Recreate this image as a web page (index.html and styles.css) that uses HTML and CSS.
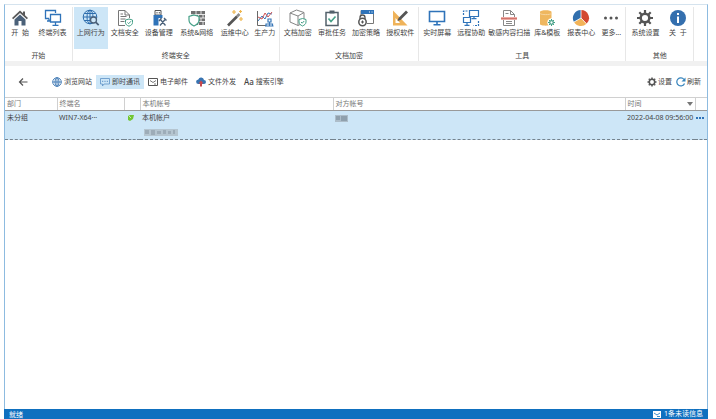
FILE: index.html
```html
<!DOCTYPE html>
<html lang="zh-CN">
<head>
<meta charset="utf-8">
<title>上网行为</title>
<link rel="stylesheet" href="styles.css">
</head>
<body>
<div class="window">
<header class="ribbon">
  <section class="group">
    <div class="items">
      <button class="item narrow"><svg class="icon" viewBox="0 0 18 18"><path d="M1 9 9 1.500l3 2.800V2.500h2v3.800L17 9l-1.200 1.200L9 4 2.200 10.200z" fill="#595959"/><path d="M3.500 10.500 9 5.500l5.500 5V16.500H10.500V12H7.500v4.500H3.500z" fill="#4b6179"/></svg><span>开&nbsp; 始</span></button>
      <button class="item"><svg class="icon" viewBox="0 0 18 18" fill="none" stroke="#2f73b9" stroke-width="1.300"><path d="M5 9.500H1.500v-8h10V4M3 12h3M5 9.500V12"/><path d="M6.500 5.500h10v7.500h-10zM11.500 13v3M8.500 16.300h6"/></svg><span>终端列表</span></button>
    </div>
    <h2>开始</h2>
  </section>
  <section class="group">
    <div class="items">
      <button class="item active"><svg class="icon" viewBox="0 0 18 18" fill="none" stroke="#2d6dad"><circle cx="8" cy="8" r="6.800"/><ellipse cx="8" cy="8" rx="3" ry="6.800"/><path d="M1.200 8h13.500M2.300 4.500h11.400M2.300 11.500H9M8 1v14"/><circle cx="11.500" cy="11" r="3" fill="#cde6f7" stroke="#4b6179" stroke-width="1.300"/><path d="m13.700 13.200 3 3" stroke="#4b6179" stroke-width="1.800"/></svg><span>上网行为</span></button>
      <button class="item"><svg class="icon" viewBox="0 0 18 18" fill="none" stroke="#777"><path d="M9 16.500H2.500v-15H9L13.500 6v3M9 1.500V6h4.500M4.500 5H7M4.500 7.500h6M4.500 10h5M4.500 12.500h4"/><path d="m13 10 3.500 1v2.500c0 2-1.500 3-3.500 3.700-2-.7-3.500-1.700-3.500-3.700V11z" stroke="#45a087"/><path d="m11.500 13.500 1.200 1.200 2.300-2.500" stroke="#45a087"/></svg><span>文档安全</span></button>
      <button class="item"><svg class="icon" viewBox="0 0 18 18"><path d="M5 1.500h6V6H5z" fill="none" stroke="#555"/><path d="M6.500 3h1v1.500h-1zM8.800 3h1v1.500h-1z" fill="#555"/><path d="M3.500 6h9v10.500h-9z" fill="#2f73b9"/><path d="M8.500 9H17v8.500H8.500z" fill="#fff"/><path d="m10 10 5.500 6.500M15.500 10 10 16.500M9 12l2.500-3M14 9l2.500 2.500" fill="none" stroke="#4b6179" stroke-width="1.300"/></svg><span>设备管理</span></button>
      <button class="item wide"><svg class="icon" viewBox="0 0 18 18"><path d="M3 2h14v14H3z" fill="#707070"/><path d="M3 5.500h14M3 9h14M3 12.500h14M8 2v3.500M13 2v3.500M5 5.500V9M10.500 5.500V9M15 5.500V9M8 9v3.500M13 9v3.500M10.500 12.500V16M15 12.500V16" stroke="#fff" stroke-width=".8"/><path d="m6 6 5 1.500V11c0 3-2 4.700-5 6-3-1.300-5-3-5-6V7.500z" fill="#fff" stroke="#45a087" stroke-width="1.200"/></svg><span>系统&amp;网络</span></button>
      <button class="item"><svg class="icon" viewBox="0 0 18 18"><path d="m2 16.500 9-9" stroke="#555" stroke-width="2.600"/><path d="m11 7.500 2.500-2.500" stroke="#8b8b8b" stroke-width="2.600"/><path d="M8 1v4M6 3h4M14.500 1v3M13 2.500h3M15 8v4M13 10h4" stroke="#eeb64e" stroke-width="1.200"/></svg><span>运维中心</span></button>
      <button class="item narrow"><svg class="icon" viewBox="0 0 18 18" fill="none"><path d="M1.500 2v14.500H10" stroke="#686868"/><path d="m2 12 4-5 3 3 3-6 4 1" stroke="#3977b7"/><path d="m2 8 4 2 3-6 3 4 4-5" stroke="#d25454"/><path d="M12 10h3v3h-3zM10 17v-2h6.500v2M13.500 13v4M9 17h8.500" stroke="#3977b7" stroke-width="1.200"/></svg><span>生产力</span></button>
    </div>
    <h2>终端安全</h2>
  </section>
  <section class="group">
    <div class="items">
      <button class="item"><svg class="icon" viewBox="0 0 18 18" fill="none" stroke="#858585"><path d="m1 4 6.500-3L15 3.500v10L9 16.500 1 13zM1 4l8 3 6-3.500M9 7v9.500"/><path d="m13.500 9.500 3.500 1V13c0 2-1.500 3-3.500 4-2-1-3.500-2-3.500-4v-2.500z" fill="#fff" stroke="#45a087"/><path d="m12 13 1.200 1.200 2-2.200" stroke="#45a087"/></svg><span>文档加密</span></button>
      <button class="item"><svg class="icon" viewBox="0 0 18 18" fill="none"><path d="M3 3.500h12v13H3z" stroke="#53616b" stroke-width="1.500"/><path d="M6.500 1.500h5v3h-5z" fill="#53616b"/><path d="m5.500 9.500 2.500 3 4.500-5" stroke="#45a087" stroke-width="1.600"/></svg><span>审批任务</span></button>
      <button class="item"><svg class="icon" viewBox="0 0 18 18" fill="none"><path d="M4 7V1.500h12.500v13H10" stroke="#777"/><path d="M4 1h13v4H4z" fill="#2f73b9"/><path d="M12 3h1M14.500 3h1" stroke="#fff"/><path d="M3 10V8.500a2.500 2.500 0 0 1 5 0V10" stroke="#555" stroke-width="1.300"/><circle cx="5.500" cy="13" r="3.700" fill="#fff" stroke="#555" stroke-width="1.500"/><path d="M5.500 11.500v3M4 13h3" stroke="#555"/></svg><span>加密策略</span></button>
      <button class="item"><svg class="icon" viewBox="0 0 18 18"><path fill-rule="evenodd" d="M2 1.500 16.500 16.500H2zM4.500 9v5H9z" fill="#efb35a"/><path d="m6.500 12 1-3 7.500-7.500 2 2L9.500 11z" fill="#555"/></svg><span>授权软件</span></button>
    </div>
    <h2>文档加密</h2>
  </section>
  <section class="group">
    <div class="items">
      <button class="item"><svg class="icon" viewBox="0 0 18 18" fill="none" stroke="#2f73b9"><path d="M1.500 2.500h15v10h-15z" stroke-width="1.600"/><path d="M9 12.500v3M5.500 15.800h7" stroke-width="1.600"/></svg><span>实时屏幕</span></button>
      <button class="item"><svg class="icon" viewBox="0 0 18 18" fill="none" stroke="#2f73b9" stroke-width="1.200"><path d="M7.500 1.500h9v6h-9zM12 7.500v2M9.500 9.700h5M1.500 8.500h7v5h-7zM5 13.500v3M2.500 16.400h5"/><path d="M1.500 6V2h4M16.500 12v4.500h-5" stroke-dasharray="2 1"/></svg><span>远程协助</span></button>
      <button class="item wide"><svg class="icon" viewBox="0 0 18 18" fill="none" stroke="#888"><path d="M3.500 8V1.500h7l4 4V8M10.500 1.500v4h4M5.500 4.500h3M3.500 11v5.500h11V11M6 12.500h6M6 14.500h6"/><path d="M1 8h16v3H1z" fill="#edaaa4" stroke="none"/><path d="M1 9.500h16" stroke="#cf756d"/></svg><span>敏感内容扫描</span></button>
      <button class="item"><svg class="icon" viewBox="0 0 18 18"><path d="M2 3c0-2.200 11.500-2.200 11.500 0v12c0 2.200-11.500 2.200-11.500 0z" fill="#efb75f"/><path d="M2 4.500c1.500 1.500 10 1.500 11.500 0" stroke="#f7d59f" fill="none"/><circle cx="13.500" cy="13.500" r="4.200" fill="#fff"/><circle cx="13.500" cy="13.500" r="1.800" fill="none" stroke="#45a087" stroke-width="1.300"/><path d="M13.500 10v1.500M13.500 15.500V17M10 13.500h1.500M15.500 13.500H17M11 11l1 1M15 15l1 1M11 16l1-1M15 12l1-1" stroke="#45a087"/></svg><span>库&amp;模板</span></button>
      <button class="item"><svg class="icon" viewBox="0 0 18 18"><path d="M9 9V1a8 8 0 0 1 5.500 13.800z" fill="#d34831"/><path d="m9 9 5.500 5.800A8 8 0 0 1 2 13z" fill="#f2b358"/><path d="M9 9 2 13A8 8 0 0 1 9 1z" fill="#326fad"/><path d="M9 1v8l5.500 5.800M9 9l-7 4" fill="none" stroke="#fff" stroke-width=".8"/></svg><span>报表中心</span></button>
      <button class="item narrow"><svg class="icon" viewBox="0 0 18 18" fill="#555"><circle cx="3.500" cy="9" r="1.500"/><circle cx="9" cy="9" r="1.500"/><circle cx="14.500" cy="9" r="1.500"/></svg><span>更多...</span></button>
    </div>
    <h2>工具</h2>
  </section>
  <section class="group">
    <div class="items">
      <button class="item"><svg class="icon" viewBox="0 0 18 18" fill="none" stroke="#555"><circle cx="9" cy="9" r="4.300" stroke-width="2.500"/><path d="M9 1v3M9 14v3M1 9h3M14 9h3M3.300 3.300l2.200 2.200M12.500 12.500l2.200 2.200M3.300 14.700l2.200-2.200M12.500 5.500l2.200-2.200" stroke-width="2.200"/></svg><span>系统设置</span></button>
      <button class="item narrow"><svg class="icon" viewBox="0 0 18 18"><circle cx="9" cy="9" r="8" fill="#346fae"/><path d="M8 4h2v2H8zM8 7.500h2V14H8z" fill="#fff"/></svg><span>关&nbsp; 于</span></button>
    </div>
    <h2>其他</h2>
  </section>
</header>
<main>
<nav class="toolbar">
  <button class="back" aria-label="返回"><svg viewBox="0 0 10 10" fill="none" stroke="#555"><path d="M9.500 5h-8M5 1.500 1.500 5 5 8.500" stroke-width="1.200"/></svg></button>
  <button class="tab"><svg viewBox="0 0 10 10" fill="none" stroke="#3974b1" stroke-width=".9"><circle cx="5" cy="5" r="4.300"/><ellipse cx="5" cy="5" rx="2" ry="4.300"/><path d="M.7 5h8.600M5 .7v8.600"/></svg>浏览网站</button>
  <button class="tab active"><svg viewBox="0 0 10 10" fill="none" stroke="#5e92c5" stroke-width=".8"><path d="M.5 1.500h9V7H4L2.500 9V7h-2z"/><path d="M2.200 4.300h1M4.500 4.300h1M6.800 4.300h1" stroke-width="1.200"/></svg>即时通讯</button>
  <button class="tab"><svg viewBox="0 0 10 10" fill="none" stroke="#555"><path d="M.5 1.500h9v7h-9z"/><path d="M2 3.500 5 5.500l3-2M6 7h2" stroke-width=".8"/></svg>电子邮件</button>
  <button class="tab"><svg viewBox="0 0 10 10"><path d="M2.500 7a2.300 2.300 0 0 1-.2-4.600A3 3 0 0 1 8 3a2 2 0 0 1 0 4z" fill="#3974b1"/><path d="M5 3.500 7.500 6.500H6v3H4v-3H2.500z" fill="#c8484d"/></svg>文件外发</button>
  <button class="tab"><b>Aa</b>搜索引擎</button>
  <span class="spacer"></span>
  <button class="tool"><svg viewBox="0 0 10 10" fill="none" stroke="#555"><circle cx="5" cy="5" r="2.700" stroke-width="1.500"/><path d="M5 .5V2M5 8v1.500M.5 5H2M8 5h1.500M1.800 1.800l1 1M7.200 7.200l1 1M1.800 8.200l1-1M7.200 2.800l1-1" stroke-width="1.500"/></svg>设置</button>
  <button class="tool"><svg viewBox="0 0 10 10" fill="none" stroke="#3583bc"><path d="M8.500 6.500A4 4 0 1 1 8 2.500" stroke-width="1.200"/><path d="M9.500.5v4h-4z" fill="#3583bc" stroke="none"/></svg>刷新</button>
</nav>
<table>
  <colgroup><col class="c-dept"><col class="c-name"><col class="c-state"><col class="c-local"><col class="c-peer"><col class="c-time"><col class="c-more"></colgroup>
  <thead><tr><th>部门</th><th>终端名</th><th></th><th>本机帐号</th><th>对方帐号</th><th><div class="sort">时间<svg viewBox="0 0 6 4"><path d="M0 0h6L3 4z" fill="#777"/></svg></div></th><th></th></tr></thead>
  <tbody><tr>
    <td>未分组</td><td>WIN7-X64···</td>
    <td><svg class="state" viewBox="0 0 6 6"><path d="M0 1 2 0h4L5 4 2 6 0 5z" fill="#72c634"/><path d="m1 1 2 2" stroke="#c9efac"/></svg></td>
    <td>本机帐户<svg class="mask" viewBox="0 0 34 7"><path d="M0 0h34v7H0z" fill="#b5c5d0"/><path d="M1 1h4v4H1zM7 1h4v5H7zM13 2h4v3h-4zM19 1h3v4h-3zM24 2h3v3h-3zM29 1h2v4h-2z" fill="#9dacb8"/></svg></td>
    <td><svg class="mask short" viewBox="0 0 13 7"><path d="M0 0h13v7H0z" fill="#adbdc9"/><path d="M1 1h4v4H1zM6 1h6v5H6z" fill="#8fa0ad"/></svg></td>
    <td>2022-04-08 09:56:00</td>
    <td class="more"><svg viewBox="0 0 8 2" fill="#2f73b9"><path d="M0 0h2v2H0zM3 0h2v2H3zM6 0h2v2H6z"/></svg></td>
  </tr></tbody>
</table>
</main>
<footer><span>就绪</span><span class="message"><svg viewBox="0 0 8 7"><path d="M0 0h8v7H0z" fill="#fff"/><path d="m1 2 3 2 3-2M4 5.500h3" fill="none" stroke="#0f70bf" stroke-width=".8"/></svg>1条未读信息</span></footer>
</div>
</body>
</html>
```
FILE: styles.css
```css
* { box-sizing: border-box; }
body {
  margin: 0;
  padding: 4px 8px 0 4px;
  background: #fff;
  color: #444;
  font: 7px/10px "Noto Sans", "Noto Sans CJK SC", sans-serif;
}
button {
  margin: 0;
  padding: 0;
  border: 0;
  background: none;
  color: inherit;
  font: inherit;
  white-space: nowrap;
}
svg { display: block; flex: none; }
.window {
  display: flex;
  flex-direction: column;
  min-height: calc(100vh - 4px);
  border: 1px solid #8dbbe0;
  border-top-color: #d5e3ee;
  border-bottom: 0;
}
.ribbon {
  display: grid;
  grid-template-columns: 68fr 207fr 140fr 206fr 68fr 13fr;
  padding-top: 2px;
  border-bottom: 5px solid #f1f1f1;
}
.group { border-right: 1px solid #e7e7e7; }
.items { display: flex; justify-content: space-around; padding: 0 1px; }
.item {
  display: flex;
  flex-direction: column;
  align-items: center;
  width: 34px;
  height: 42px;
  padding-top: 2px;
}
.narrow { width: 26px; }
.wide { width: 42px; }
.active { background: #cde6f7; }
.icon { width: 18px; height: 18px; margin-bottom: 1px; }
h2 { margin: 2px 0 0; font: inherit; text-align: center; }
main { flex: 1; }
.toolbar {
  display: flex;
  align-items: center;
  height: 31px;
  padding: 0 6px 0 13px;
}
.toolbar button { display: flex; align-items: center; height: 14px; }
.toolbar svg { width: 10px; height: 10px; }
.back { margin-right: 20px; }
.tab { gap: 2px; padding: 0 4px; }
.tab b { font-size: 8px; font-weight: 500; }
.spacer { flex: 1; }
.tool { gap: 1px; margin-left: 4px; }
table { width: 100%; border-collapse: collapse; table-layout: fixed; }
.c-dept { width: 52px; }
.c-name { width: 67px; }
.c-state { width: 16px; }
.c-local { width: 193px; }
.c-time { width: 70px; }
.c-more { width: 12px; }
th, td { padding: 2px; text-align: left; vertical-align: top; white-space: nowrap; }
th {
  padding: 1px 2px;
  border: 1px solid #d0d0d0;
  border-width: 1px 1px 1px 0;
  border-bottom-color: #999;
  color: #777;
  font-weight: 400;
}
th:last-child { border-right: 0; }
tbody tr { height: 29px; background: #cde6f7; border-bottom: 1px dashed #75838e; }
.sort { display: flex; align-items: center; justify-content: space-between; }
.sort svg { width: 6px; height: 4px; }
.state { width: 6px; height: 6px; margin: 2px 0 0 2px; }
.mask { width: 34px; height: 7px; margin: 6px 0 0 2px; }
.short { width: 13px; margin: 2px 0 0; }
.more svg { width: 8px; height: 2px; margin-top: 4px; }
.more { padding-left: 1px; }
footer {
  display: flex;
  justify-content: space-between;
  height: 10px;
  margin: 0 -1px;
  padding: 0 5px;
  background: #0f70bf;
  color: #fff;
  line-height: 12px;
}
.message { display: flex; align-items: center; gap: 3px; }
.message svg { width: 8px; height: 7px; }
```
